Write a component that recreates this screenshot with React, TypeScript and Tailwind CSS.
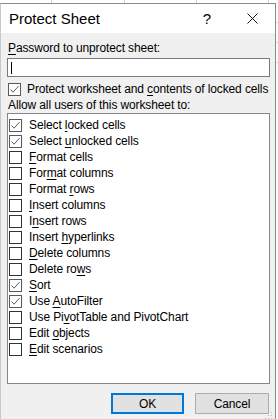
import React from "react";

type Item = { pre: string; key: string; post: string; checked: boolean };

const items: Item[] = [
  { pre: "Select ", key: "l", post: "ocked cells", checked: true },
  { pre: "Select ", key: "u", post: "nlocked cells", checked: true },
  { pre: "", key: "F", post: "ormat cells", checked: false },
  { pre: "For", key: "m", post: "at columns", checked: false },
  { pre: "Format ", key: "r", post: "ows", checked: false },
  { pre: "", key: "I", post: "nsert columns", checked: false },
  { pre: "I", key: "n", post: "sert rows", checked: false },
  { pre: "Insert ", key: "h", post: "yperlinks", checked: false },
  { pre: "", key: "D", post: "elete columns", checked: false },
  { pre: "Delete ro", key: "w", post: "s", checked: false },
  { pre: "", key: "S", post: "ort", checked: true },
  { pre: "Use ", key: "A", post: "utoFilter", checked: true },
  { pre: "Use Pi", key: "v", post: "otTable and PivotChart", checked: false },
  { pre: "Edit ", key: "o", post: "bjects", checked: false },
  { pre: "", key: "E", post: "dit scenarios", checked: false },
];

function Box({ checked }: { checked: boolean }) {
  return (
    <span
      className={`flex size-[13px] shrink-0 items-center justify-center border bg-white ${
        checked ? "border-[#5a5a5a]" : "border-[#333333]"
      }`}
    >
      {checked ? (
        <svg width="11" height="11" viewBox="0 0 11 11" fill="none" aria-hidden>
          <path d="M1.5 5.5L4 8.2L9.5 2.2" stroke="#5f5f5f" strokeWidth="1" />
        </svg>
      ) : null}
    </span>
  );
}

function Label({ pre, k, post }: { pre: string; k: string; post: string }) {
  return (
    <span className="whitespace-nowrap">
      {pre}
      <span className="underline underline-offset-2">{k}</span>
      {post}
    </span>
  );
}

export default function App() {
  return (
    <div
      className="flex h-[419px] w-[278px] flex-col overflow-hidden bg-white text-[12px] leading-[16px] tracking-[-0.12px] text-black"
      style={{ fontFamily: '"Liberation Sans", Arial, sans-serif' }}
    >
      {/* sheet behind the dialog */}
      <div className="flex h-[3px] shrink-0">
        <div className="w-[52px] border-r border-[#d4d4d4]" />
        <div className="w-[73px] border-r border-[#d4d4d4]" />
        <div className="w-[72px] border-r border-[#d4d4d4]" />
        <div className="w-[72px] border-r border-[#d4d4d4]" />
      </div>

      <div className="flex min-h-0 flex-1">
        <div className="relative flex w-[276px] shrink-0 flex-col border-t border-r border-l border-[#8a8a8a] border-l-[#c8c8c8]">
          {/* title bar */}
          <div className="flex h-[29px] shrink-0 items-center bg-white">
            <span className="pl-[8px] text-[15px] leading-[18px] tracking-normal">Protect Sheet</span>
            <span className="ml-auto mr-[36px] text-[15px] leading-[18px]">?</span>
            <svg className="mr-[17px]" width="11" height="11" viewBox="0 0 11 11" fill="none" aria-hidden>
              <path d="M0.5 0.5L10.5 10.5M10.5 0.5L0.5 10.5" stroke="#111" strokeWidth="1" />
            </svg>
          </div>

          {/* body */}
          <div className="flex flex-1 flex-col bg-[#f0f0f0] px-[6px]">
            <div className="mt-[7px] pl-[1px]">
              <Label pre="" k="P" post="assword to unprotect sheet:" />
            </div>
            <div className="mt-[2px] flex h-[19px] w-[263px] shrink-0 items-center border border-[#7a7a7a] bg-white pl-[3px]">
              <span className="h-[12px] w-px bg-black" />
            </div>
            <div className="mt-[4px] flex h-[16px] items-center gap-[6px] pl-[1px]">
              <Box checked />
              <Label pre="Protect worksheet and " k="c" post="ontents of locked cells" />
            </div>
            <div className="pl-[1px]">Allow all users of this worksheet to:</div>

            <div className="h-[271px] w-[263px] shrink-0 border border-[#828790] bg-white pt-[3px]">
              {items.map((it) => (
                <div key={it.pre + it.key + it.post} className="flex h-[16px] items-center gap-[7px] pl-[1px]">
                  <Box checked={it.checked} />
                  <Label pre={it.pre} k={it.key} post={it.post} />
                </div>
              ))}
            </div>

            <div className="mt-[9px] flex gap-[11px] pl-[104px]">
              <button
                type="button"
                className="flex h-[21px] w-[73px] items-center justify-center border-2 border-[#0078d7] bg-[#e1e1e1]"
              >
                OK
              </button>
              <button
                type="button"
                className="flex h-[21px] w-[74px] items-center justify-center border border-[#adadad] bg-[#e1e1e1]"
              >
                Cancel
              </button>
            </div>
          </div>

          {/* size grip */}
          <svg className="absolute bottom-0 right-[2px]" width="8" height="7" viewBox="0 0 8 7" aria-hidden>
            <rect x="6" y="0" width="1" height="1" fill="#b8b8b8" />
            <rect x="3" y="3" width="1" height="1" fill="#b8b8b8" />
            <rect x="6" y="3" width="1" height="1" fill="#b8b8b8" />
            <rect x="0" y="6" width="1" height="1" fill="#b8b8b8" />
            <rect x="3" y="6" width="1" height="1" fill="#b8b8b8" />
            <rect x="6" y="6" width="1" height="1" fill="#b8b8b8" />
          </svg>
        </div>

        <div className="flex flex-1 flex-col">
          <div className="h-[20px] border-b border-[#d4d4d4]" />
          <div className="h-[20px] border-b border-[#d4d4d4]" />
          <div className="h-[20px] border-b border-[#d4d4d4]" />
        </div>
      </div>
    </div>
  );
}
